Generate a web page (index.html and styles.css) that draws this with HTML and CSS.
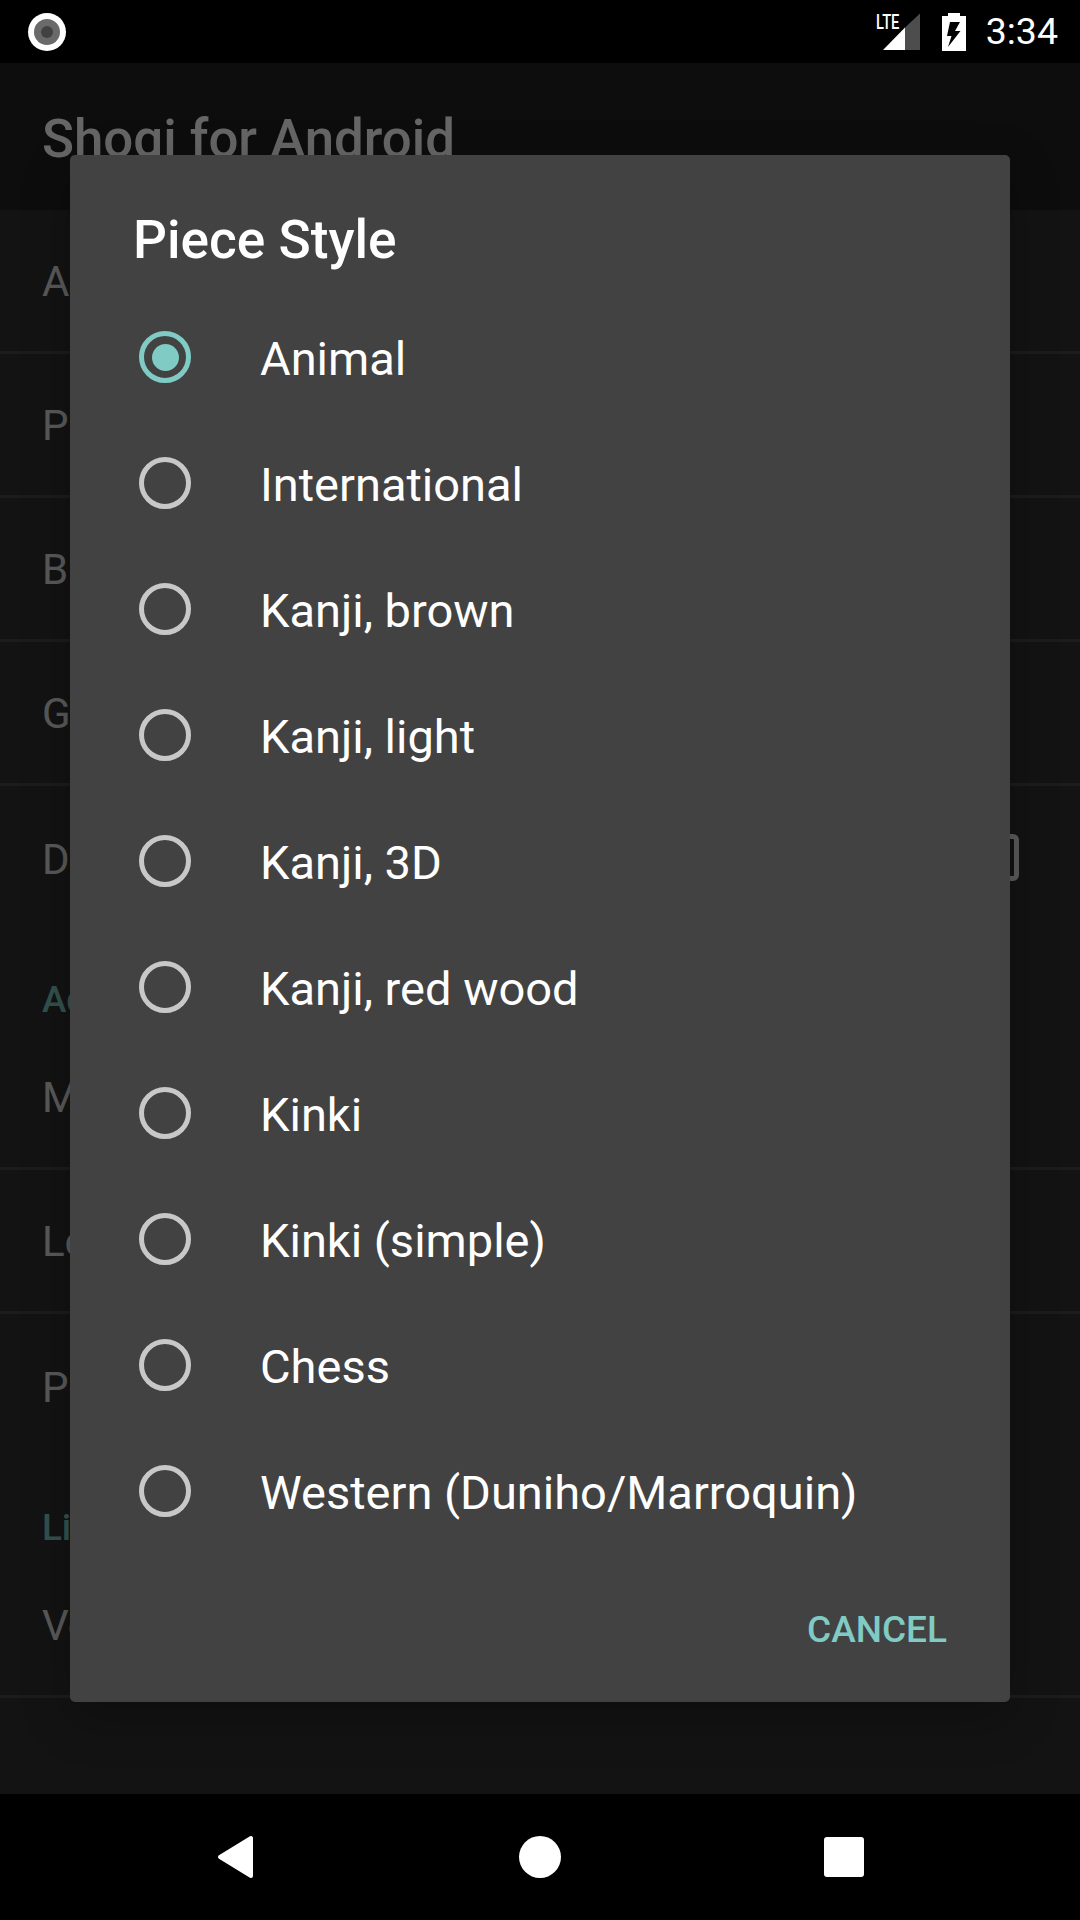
FILE: index.html
```html
<!DOCTYPE html>
<html>
<head>
    <meta charset="UTF-8">
    <title>Shogi for Android</title>
    <link rel="stylesheet" href="styles.css">
</head>
<body>
  <div class="statusbar">
      <svg class="rec" width="38" height="38" viewBox="0 0 38 38">
          <circle cx="19" cy="19" r="19" fill="#fff"/>
          <circle cx="19" cy="19" r="13" fill="#6a6a6a"/>
          <circle cx="19" cy="19" r="6" fill="#424242"/>
      </svg>
      <div class="status_right">
          <div class="signal">
              <span class="lte">LTE</span>
              <svg width="47" height="38" viewBox="0 0 47 38">
                  <polygon points="31,14.500 31,37 9,37" fill="#fff"/>
                  <polygon points="46,0.500 46,37 31,37 31,14.500" fill="#4d4d4d"/>
              </svg>
          </div>
          <svg class="battery" width="24" height="38" viewBox="0 0 24 38">
              <path d="M6 0h12v3h6v35H0V3h6z" fill="#fff"/>
              <path d="M8 9h10l-5 9h5.500L6 34l3.500-11H5z" fill="#000"/>
          </svg>
          <span class="clock">3:34</span>
      </div>
  </div>

  <div class="screen">
      <div class="appbar">Shogi for Android</div>
      <div class="row line"><span>Ai</span></div>
      <div class="row line"><span>Pi</span></div>
      <div class="row line"><span>Bo</span></div>
      <div class="row line"><span>Gu</span></div>
      <div class="row"><span>Di</span><i class="check"></i></div>
      <div class="cat">Ad</div>
      <div class="row line"><span>Me</span></div>
      <div class="row line"><span>Lo</span></div>
      <div class="row"><span>Po</span></div>
      <div class="cat">Li</div>
      <div class="row line"><span>Ve</span></div>

      <div class="scrim">
          <div class="dialog">
              <div class="dialog_title">Piece Style</div>
              <div class="option"><i class="radio on"></i><span>Animal</span></div>
              <div class="option"><i class="radio"></i><span>International</span></div>
              <div class="option"><i class="radio"></i><span>Kanji, brown</span></div>
              <div class="option"><i class="radio"></i><span>Kanji, light</span></div>
              <div class="option"><i class="radio"></i><span>Kanji, 3D</span></div>
              <div class="option"><i class="radio"></i><span>Kanji, red wood</span></div>
              <div class="option"><i class="radio"></i><span>Kinki</span></div>
              <div class="option"><i class="radio"></i><span>Kinki (simple)</span></div>
              <div class="option"><i class="radio"></i><span>Chess</span></div>
              <div class="option"><i class="radio"></i><span>Western (Duniho/Marroquin)</span></div>
              <div class="dialog_foot"><span class="cancel">CANCEL</span></div>
          </div>
      </div>
  </div>

  <div class="navbar">
      <svg width="60" height="46" viewBox="0 0 60 46">
          <polygon points="45,4 45,42 14,23" fill="#fff" stroke="#fff" stroke-width="4" stroke-linejoin="round"/>
      </svg>
      <svg width="60" height="46" viewBox="0 0 60 46">
          <circle cx="30" cy="23" r="21" fill="#fff"/>
      </svg>
      <svg width="60" height="46" viewBox="0 0 60 46">
          <rect x="10" y="3" width="40" height="40" rx="3" fill="#fff"/>
      </svg>
  </div>
</body>
</html>
```

FILE: styles.css
```css
* {
  box-sizing: border-box;
}
html, body {
  margin: 0;
  height: 100%;
}
body {
  width: 1080px;
  height: 1920px;
  display: flex;
  flex-direction: column;
  overflow: hidden;
  font-family: 'Roboto', sans-serif;
  background-color: #000;
  color: #fff;
}

/* status bar */
.statusbar {
  height: 63px;
  flex: none;
  display: flex;
  justify-content: space-between;
  align-items: center;
  padding: 0 22px 0 28px;
  background-color: #000;
}
.status_right {
  display: flex;
  align-items: center;
}
.rec {
  display: block;
}
.signal {
  position: relative;
  width: 47px;
  height: 38px;
  margin-right: 21px;
}
.signal svg {
  display: block;
}
.lte {
  position: absolute;
  top: -1px;
  left: 2px;
  font-size: 21px;
  font-weight: 500;
  line-height: 21px;
  transform: scaleX(0.7);
  transform-origin: left top;
}
.battery {
  display: block;
  margin-right: 20px;
}
.clock {
  font-size: 37.5px;
  line-height: 63px;
}

/* settings list, behind the dialog */
.screen {
  flex: 1;
  position: relative;
  background-color: #303030;
  color: rgba(255, 255, 255, 0.87);
  font-size: 42px;
}
.appbar {
  height: 147px;
  padding: 5px 42px 0;
  display: flex;
  align-items: center;
  background-color: #212121;
  color: #fff;
  font-size: 52.8px;
  font-weight: 500;
  white-space: nowrap;
}
.row {
  height: 144px;
  padding: 2px 61px 0 42px;
  display: flex;
  justify-content: space-between;
  align-items: center;
}
.line {
  border-bottom: 3px solid #484848;
}
.check {
  width: 47px;
  height: 47px;
  margin-top: -4px;
  border: 5px solid #fff;
  border-radius: 6px;
  opacity: 0.87;
}
.cat {
  height: 96px;
  padding: 52px 42px 0;
  color: #80cbc4;
  font-size: 36.75px;
  font-weight: 500;
  line-height: 36px;
}

/* dialog */
.scrim {
  position: absolute;
  top: 0;
  right: 0;
  bottom: 0;
  left: 0;
  display: flex;
  justify-content: center;
  align-items: center;
  background-color: rgba(0, 0, 0, 0.6);
}
.dialog {
  width: 940px;
  height: 1547px;
  border-radius: 5px;
  background-color: #424242;
  color: #fff;
  box-shadow: 0 16px 48px rgba(0, 0, 0, 0.25);
}
.dialog_title {
  height: 139px;
  padding: 54px 0 0 63px;
  font-size: 53.2px;
  font-weight: 500;
  line-height: 62px;
}
.option {
  height: 126px;
  padding-left: 69px;
  display: flex;
  align-items: center;
  font-size: 47px;
}
.option span {
  padding-top: 2px;
}
.radio {
  width: 52px;
  height: 52px;
  margin-right: 69px;
  display: flex;
  justify-content: center;
  align-items: center;
  border: 5.25px solid #c8c8c8;
  border-radius: 50%;
}
.radio.on {
  border-color: #80cbc4;
}
.radio.on::after {
  content: "";
  width: 27px;
  height: 27px;
  border-radius: 50%;
  background-color: #80cbc4;
}
.dialog_foot {
  height: 148px;
  padding: 2px 63px 0 0;
  display: flex;
  justify-content: flex-end;
  align-items: center;
}
.cancel {
  color: #80cbc4;
  font-size: 37px;
  font-weight: 500;
}

/* nav bar */
.navbar {
  height: 126px;
  flex: none;
  display: flex;
  justify-content: center;
  align-items: center;
  gap: 244px;
  background-color: #000;
}
```
